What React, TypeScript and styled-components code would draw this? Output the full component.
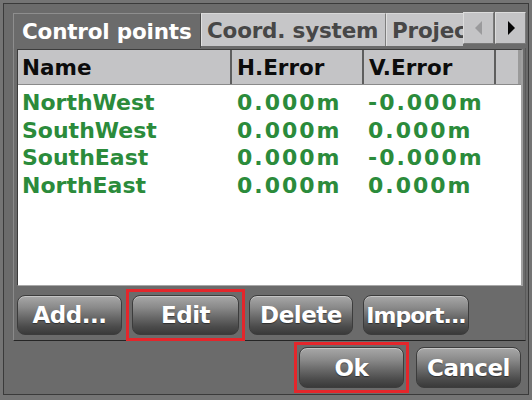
import React from "react";
import styled, { createGlobalStyle } from "styled-components";

const Global = createGlobalStyle`
  html, body { margin: 0; padding: 0; background: #747474; }
  * { box-sizing: border-box; }
`;

const FONT = `"DejaVu Sans", "Liberation Sans", sans-serif`;

const Page = styled.div`
  width: 532px;
  height: 400px;
  padding: 3px;
  background: #747474;
  font-family: ${FONT};
`;

const Frame = styled.div`
  height: 392px;
  border: 1px solid #3a3a3a;
  background: #6b6b6b;
  padding: 9px 3px 0 9px;
  display: flex;
  flex-direction: column;
`;

const TabControl = styled.div`
  width: 513px;
  display: flex;
  flex-direction: column;
`;

const TabStrip = styled.div`
  height: 35px;
  display: flex;
  align-items: flex-start;
`;

const TabViewport = styled.div`
  flex: 1;
  display: flex;
  overflow: hidden;
  align-items: flex-start;
`;

const Tab = styled.div<{ $active?: boolean; $w: number }>`
  flex: none;
  width: ${(p) => p.$w}px;
  height: ${(p) => (p.$active ? 35 : 33)}px;
  padding-left: ${(p) => (p.$active ? 8 : 5)}px;
  display: flex;
  align-items: center;
  white-space: nowrap;
  overflow: hidden;
  font-size: 21.5px;
  font-weight: bold;
  letter-spacing: -0.2px;
  color: ${(p) => (p.$active ? "#ffffff" : "#474747")};
  background: ${(p) => (p.$active ? "#6b6b6b" : "#c6c6c8")};
  border-top: 1px solid ${(p) => (p.$active ? "#8e8e8e" : "#d8d8d8")};
  border-left: 1px solid ${(p) => (p.$active ? "#8e8e8e" : "#e0e0e0")};
  border-right: 1px solid ${(p) => (p.$active ? "#4a4a4a" : "#7e7e7e")};
`;

const ArrowGroup = styled.div`
  display: flex;
  gap: 1px;
  margin-top: -1px;
`;

const ArrowButton = styled.div`
  width: 31px;
  height: 32px;
  background: #c4c4c6;
  border-top: 1px solid #dcdcdc;
  border-left: 1px solid #dcdcdc;
  border-right: 1px solid #7a7a7a;
  border-bottom: 1px solid #7a7a7a;
  display: flex;
  align-items: center;
  justify-content: center;
`;

const Panel = styled.div`
  height: 293px;
  border-left: 1px solid #8a8a8a;
  border-right: 1px solid #5a5a5a;
  border-bottom: 1px solid #262626;
  padding: 1px 2px 0 3px;
  display: flex;
  flex-direction: column;
`;

const List = styled.div`
  width: 506px;
  height: 237px;
  background: #ffffff;
  border-top: 1px solid #3c3c3c;
  border-left: 1px solid #3c3c3c;
  border-right: 2px solid #a0a0a0;
  border-bottom: 1px solid #a8a8a8;
  display: flex;
  flex-direction: column;
`;

const Header = styled.div`
  height: 35px;
  display: grid;
  grid-template-columns: 214px 132px 132px 1fr;
  background: #c4c4c6;
  border-bottom: 1px solid #8a8a8a;
`;

const HeadCell = styled.div<{ $pad: number }>`
  display: flex;
  align-items: center;
  padding-left: ${(p) => p.$pad}px;
  border-right: 2px solid #5e5e5e;
  font-size: 21.5px;
  font-weight: bold;
  color: #0c0c0c;
  white-space: nowrap;
  overflow: hidden;
  &:last-child { border-right: 3px solid #9a9a9a; }
`;

const Body = styled.div`
  padding-top: 4px;
  display: flex;
  flex-direction: column;
`;

const Row = styled.div`
  height: 27.5px;
  display: grid;
  grid-template-columns: 214px 132px 132px;
  align-items: center;
  color: #2b8b3b;
  font-weight: bold;
  font-size: 22px;
  white-space: nowrap;
`;

const NameCell = styled.div`
  padding-left: 4px;
`;

const ValueCell = styled.div<{ $pad: number }>`
  padding-left: ${(p) => p.$pad}px;
  letter-spacing: 2px;
`;

const ButtonRow = styled.div`
  margin-top: 9px;
  display: flex;
  gap: 10px;
`;

const Marked = styled.div<{ $off: number }>`
  display: flex;
  outline: 3px solid #e4262b;
  outline-offset: ${(p) => p.$off}px;
`;

const Button = styled.div<{ $w: number; $h?: number; $fs?: number; $ls?: number }>`
  width: ${(p) => p.$w}px;
  height: ${(p) => p.$h ?? 40}px;
  border-radius: 8px;
  border: 1px solid #3c3c3c;
  background: linear-gradient(
    to bottom,
    #a8a8a8 0%,
    #8a8a8a 30%,
    #6a6a6a 55%,
    #4c4c4c 80%,
    #3a3a3a 100%
  );
  box-shadow: inset 0 1px 0 rgba(255, 255, 255, 0.35);
  color: #ffffff;
  font-size: ${(p) => p.$fs ?? 23}px;
  font-weight: bold;
  letter-spacing: ${(p) => p.$ls ?? -0.5}px;
  display: flex;
  align-items: center;
  justify-content: center;
  white-space: nowrap;
  text-shadow: 0 1px 1px rgba(0, 0, 0, 0.45);
`;

const Footer = styled.div`
  margin-top: 6px;
  padding-right: 4px;
  display: flex;
  justify-content: flex-end;
  gap: 12px;
`;

const rows = [
  ["NorthWest", "0.000m", "-0.000m"],
  ["SouthWest", "0.000m", "0.000m"],
  ["SouthEast", "0.000m", "-0.000m"],
  ["NorthEast", "0.000m", "0.000m"],
];

export default function App() {
  return (
    <>
      <Global />
      <Page>
        <Frame>
          <TabControl>
            <TabStrip>
              <TabViewport>
                <Tab $active $w={188}>Control points</Tab>
                <Tab $w={185}>Coord. system</Tab>
                <Tab $w={140}>Projection</Tab>
              </TabViewport>
              <ArrowGroup>
                <ArrowButton>
                  <svg width="10" height="16" viewBox="0 0 10 16">
                    <polygon points="8,1 1,8 8,15" fill="#9a9a9c" />
                  </svg>
                </ArrowButton>
                <ArrowButton>
                  <svg width="10" height="16" viewBox="0 0 10 16">
                    <polygon points="2,1 9,8 2,15" fill="#050505" />
                  </svg>
                </ArrowButton>
              </ArrowGroup>
            </TabStrip>
            <Panel>
              <List>
                <Header>
                  <HeadCell $pad={4}>Name</HeadCell>
                  <HeadCell $pad={5}>H.Error</HeadCell>
                  <HeadCell $pad={5}>V.Error</HeadCell>
                  <HeadCell $pad={0} />
                </Header>
                <Body>
                  {rows.map((r) => (
                    <Row key={r[0]}>
                      <NameCell>{r[0]}</NameCell>
                      <ValueCell $pad={5}>{r[1]}</ValueCell>
                      <ValueCell $pad={4}>{r[2]}</ValueCell>
                    </Row>
                  ))}
                </Body>
              </List>
              <ButtonRow>
                <Button $w={105}>Add...</Button>
                <Marked $off={3}>
                  <Button $w={107}>Edit</Button>
                </Marked>
                <Button $w={104}>Delete</Button>
                <Button $w={106} $fs={22} $ls={-1}>Import...</Button>
              </ButtonRow>
            </Panel>
          </TabControl>
          <Footer>
            <Marked $off={2}>
              <Button $w={105} $h={41}>Ok</Button>
            </Marked>
            <Button $w={105} $h={41}>Cancel</Button>
          </Footer>
        </Frame>
      </Page>
    </>
  );
}
